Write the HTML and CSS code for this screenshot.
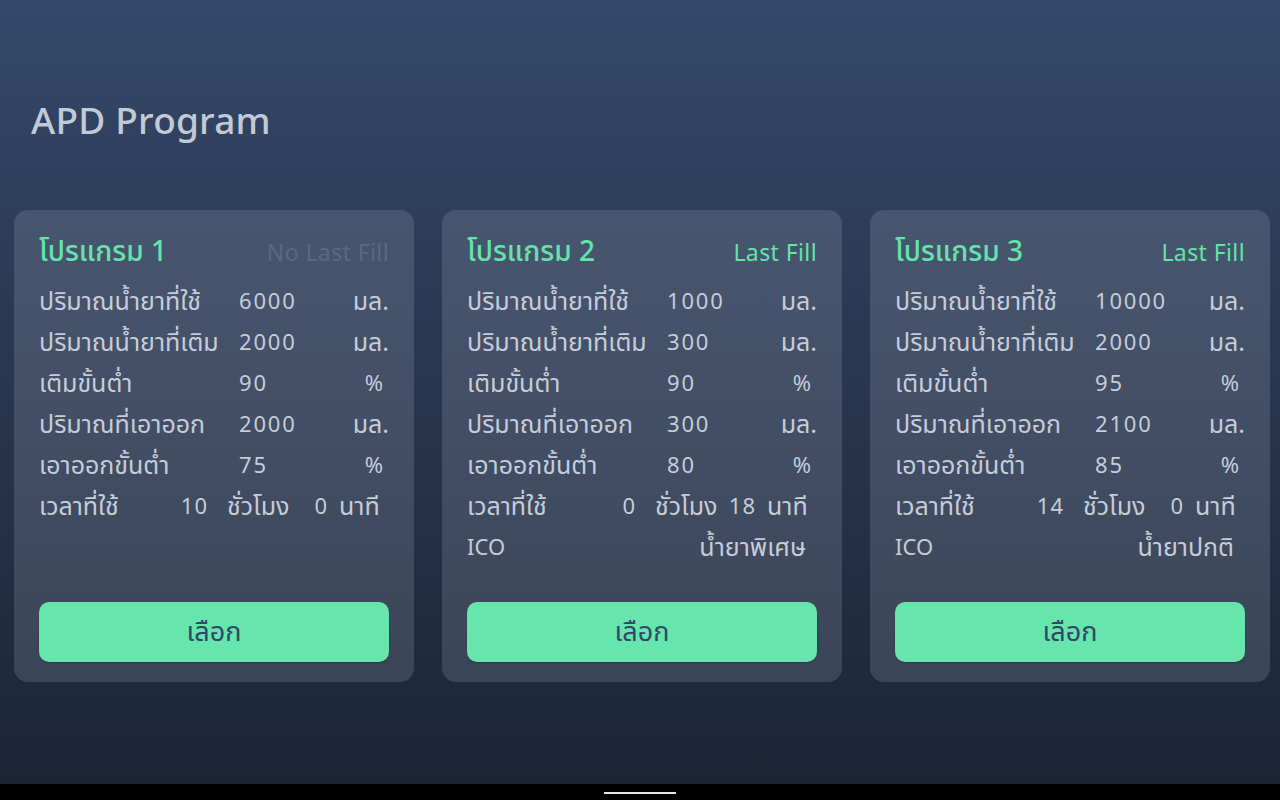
FILE: index.html
```html
<!DOCTYPE html>
<html lang="th">
<head>
<meta charset="utf-8">
<title>APD Program</title>
<link rel="stylesheet" href="styles.css">
</head>
<body>
<div class="screen">
  <main class="app">
    <h1 class="title">APD Program</h1>
    <section class="cards">
      <article class="card">
        <header class="card-head">
          <h2 class="card-title">โปรแกรม 1</h2>
          <span class="fill fill-none">No Last Fill</span>
        </header>
        <div class="rows">
          <div class="row"><span class="th">ปริมาณน้ำยาที่ใช้</span><span class="num">6000</span><span class="unit th">มล.</span></div>
          <div class="row"><span class="th">ปริมาณน้ำยาที่เติม</span><span class="num">2000</span><span class="unit th">มล.</span></div>
          <div class="row"><span class="th">เติมขั้นต่ำ</span><span class="num">90</span><span class="unit pct">%</span></div>
          <div class="row"><span class="th">ปริมาณที่เอาออก</span><span class="num">2000</span><span class="unit th">มล.</span></div>
          <div class="row"><span class="th">เอาออกขั้นต่ำ</span><span class="num">75</span><span class="unit pct">%</span></div>
          <div class="row time"><span class="th">เวลาที่ใช้</span><span class="num">10</span><span class="th">ชั่วโมง</span><span class="num">0</span><span class="th">นาที</span></div>
        </div>
        <button class="pick">เลือก</button>
      </article>
      <article class="card">
        <header class="card-head">
          <h2 class="card-title">โปรแกรม 2</h2>
          <span class="fill">Last Fill</span>
        </header>
        <div class="rows">
          <div class="row"><span class="th">ปริมาณน้ำยาที่ใช้</span><span class="num">1000</span><span class="unit th">มล.</span></div>
          <div class="row"><span class="th">ปริมาณน้ำยาที่เติม</span><span class="num">300</span><span class="unit th">มล.</span></div>
          <div class="row"><span class="th">เติมขั้นต่ำ</span><span class="num">90</span><span class="unit pct">%</span></div>
          <div class="row"><span class="th">ปริมาณที่เอาออก</span><span class="num">300</span><span class="unit th">มล.</span></div>
          <div class="row"><span class="th">เอาออกขั้นต่ำ</span><span class="num">80</span><span class="unit pct">%</span></div>
          <div class="row time"><span class="th">เวลาที่ใช้</span><span class="num">0</span><span class="th">ชั่วโมง</span><span class="num">18</span><span class="th">นาที</span></div>
          <div class="row ico"><span>ICO</span><span class="th">น้ำยาพิเศษ</span></div>
        </div>
        <button class="pick">เลือก</button>
      </article>
      <article class="card">
        <header class="card-head">
          <h2 class="card-title">โปรแกรม 3</h2>
          <span class="fill">Last Fill</span>
        </header>
        <div class="rows">
          <div class="row"><span class="th">ปริมาณน้ำยาที่ใช้</span><span class="num">10000</span><span class="unit th">มล.</span></div>
          <div class="row"><span class="th">ปริมาณน้ำยาที่เติม</span><span class="num">2000</span><span class="unit th">มล.</span></div>
          <div class="row"><span class="th">เติมขั้นต่ำ</span><span class="num">95</span><span class="unit pct">%</span></div>
          <div class="row"><span class="th">ปริมาณที่เอาออก</span><span class="num">2100</span><span class="unit th">มล.</span></div>
          <div class="row"><span class="th">เอาออกขั้นต่ำ</span><span class="num">85</span><span class="unit pct">%</span></div>
          <div class="row time"><span class="th">เวลาที่ใช้</span><span class="num">14</span><span class="th">ชั่วโมง</span><span class="num">0</span><span class="th">นาที</span></div>
          <div class="row ico"><span>ICO</span><span class="th">น้ำยาปกติ</span></div>
        </div>
        <button class="pick">เลือก</button>
      </article>
    </section>
  </main>
  <footer class="navbar"><span class="handle"></span></footer>
</div>
</body>
</html>
```

FILE: styles.css
```css
* { box-sizing: border-box; }
html, body { margin: 0; padding: 0; }
body {
  width: 1280px;
  height: 800px;
  overflow: hidden;
  font-family: "Noto Sans", "Noto Sans Thai", "Open Sans", sans-serif;
  color: #c9cfda;
}
.screen {
  display: flex;
  flex-direction: column;
  height: 800px;
}
.app {
  flex: 1;
  background: linear-gradient(180deg, #34496a 0%, #2c3b56 35%, #1b2536 100%);
  padding: 0 10px 0 14px;
}
.title {
  margin: 0;
  padding: 96px 0 0 17px;
  height: 210px;
  font-size: 37px;
  font-weight: 500;
  line-height: 48px;
  color: #c3cad6;
  letter-spacing: 0.2px;
}
.cards {
  display: flex;
  gap: 28px;
}
.card {
  width: 400px;
  height: 472px;
  border-radius: 14px;
  background: linear-gradient(180deg, #475670 0%, #3b4558 100%);
  padding: 22px 25px 20px 25px;
  display: flex;
  flex-direction: column;
}
.card-head {
  display: flex;
  justify-content: space-between;
  align-items: center;
  height: 40px;
  margin-bottom: 8px;
}
.card-title {
  margin: 0;
  font-size: 28px;
  font-weight: 500;
  color: #64e3aa;
}
.fill {
  font-size: 23px;
  letter-spacing: 0.4px;
  color: #64e3aa;
}
.fill-none { color: #5c687f; }
.rows {
  flex: 1;
  display: flex;
  flex-direction: column;
}
.row {
  display: grid;
  grid-template-columns: 200px 1fr auto;
  align-items: center;
  height: 41px;
  line-height: 41px;
  font-size: 22px;
  color: #c6ccd8;
  white-space: nowrap;
}
.th { font-size: 25px; }
.num { letter-spacing: 1.8px; }
.unit { text-align: right; }
.pct { padding-right: 6px; }
.row.time {
  grid-template-columns: 130px 39px 80px 40px 1fr;
}
.row.time .num { text-align: right; letter-spacing: 1px; }
.row.time .num + .th { padding-left: 19px; }
.row.time .num:nth-child(4) + .th { padding-left: 11px; }
.row.ico {
  grid-template-columns: 1fr auto;
  padding-right: 11px;
}
.pick {
  height: 60px;
  border: none;
  border-radius: 10px;
  background: #66e6ad;
  color: #34476a;
  font-family: inherit;
  font-size: 27px;
  cursor: pointer;
  box-shadow: 0 1px 2px rgba(0,0,0,0.25);
}
.navbar {
  height: 16px;
  background: #000;
  display: flex;
  justify-content: center;
  align-items: flex-start;
}
.handle {
  width: 72px;
  height: 2px;
  margin-top: 8px;
  background: #e6e6e6;
}
```
